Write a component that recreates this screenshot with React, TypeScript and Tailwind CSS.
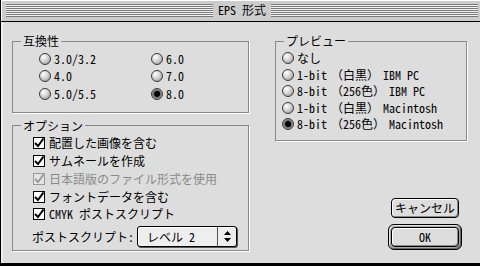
const font = "font-['Noto_Sans_Mono_CJK_JP','Noto_Sans_CJK_JP',sans-serif]";

const Radio = ({ on }: { on?: boolean }) => (
	<span
		className={
			"flex h-[12px] w-[12px] shrink-0 items-center justify-center rounded-full border border-[#3a3a3a] " +
			(on
				? "bg-[radial-gradient(circle_at_50%_50%,#000_0_35%,#666_45%,#bbb_85%)]"
				: "bg-[radial-gradient(circle_at_35%_30%,#ffffff_0,#d4d4d4_45%,#8c8c8c_100%)]")
		}
	>
		{on && <span className="h-[5px] w-[5px] rounded-full bg-black" />}
	</span>
);

const Check = ({ disabled }: { disabled?: boolean }) => (
	<span
		className={
			"flex h-[12px] w-[12px] shrink-0 items-center justify-center border " +
			(disabled ? "border-[#9a9a9a] bg-[#e4e4e4]" : "border-black bg-white")
		}
	>
		<svg width="10" height="10" viewBox="0 0 10 10">
			<path
				d="M1 5 L4 8 L9.5 0.5"
				fill="none"
				stroke={disabled ? "#9a9a9a" : "#000"}
				strokeWidth="2"
			/>
		</svg>
	</span>
);

const Group = ({ label, children }: { label: string; children: React.ReactNode }) => (
	<fieldset className="m-0 min-w-0 border border-[#8a8a8a] p-0 shadow-[1px_1px_0_#ffffff]">
		<legend className="ml-[8px] px-[2px] text-[12px] leading-[14px]">{label}</legend>
		{children}
	</fieldset>
);

const compat = [
	{ label: "3.0/3.2" },
	{ label: "6.0" },
	{ label: "4.0" },
	{ label: "7.0" },
	{ label: "5.0/5.5" },
	{ label: "8.0", on: true },
];

// thin gaps around the full-width brackets, as in the original
const preview = [
	{ label: "なし" },
	{ label: "1-bit\u2004（白黒）\u2004IBM PC" },
	{ label: "8-bit\u2004（256色）\u2004IBM PC" },
	{ label: "1-bit\u2004（白黒）\u2004Macintosh" },
	{ label: "8-bit\u2004（256色）\u2004Macintosh", on: true },
];

const options = [
	{ label: "配置した画像を含む" },
	{ label: "サムネールを作成" },
	{ label: "日本語版のファイル形式を使用", disabled: true },
	{ label: "フォントデータを含む" },
	{ label: "CMYK ポストスクリプト" },
];

const App = () => {
	return (
		<div
			className={
				"flex h-[266px] w-[480px] flex-col overflow-hidden border-b-[3px] border-l border-black bg-[#dddddd] text-black " +
				font
			}
		>
			{/* Title bar */}
			<div className="flex h-[22px] shrink-0 items-start border-b border-black bg-[#cccccc] pl-[5px] pr-[2px] shadow-[inset_1px_1px_0_#fff]">
				<div className="mt-[4px] h-[13px] flex-1 bg-[repeating-linear-gradient(to_bottom,#7a7a7a_0_1px,#f2f2f2_1px_2px)]" />
				<div className="px-[5px] pt-[2px] text-[12px] leading-[16px]">EPS 形式</div>
				<div className="mt-[4px] h-[13px] flex-1 bg-[repeating-linear-gradient(to_bottom,#7a7a7a_0_1px,#f2f2f2_1px_2px)]" />
			</div>

			<div className="flex flex-1 gap-[26px] px-[11px] pt-[12px] shadow-[inset_2px_0_0_#eeeeee]">
				{/* Left column */}
				<div className="flex w-[237px] flex-col gap-[6px]">
					<Group label="互換性">
						<div className="grid grid-cols-[112px_1fr] auto-rows-[17.5px] pb-[9px] pl-[26px] pt-[2px] text-[12px]">
							{compat.map((c) => (
								<div key={c.label} className="flex items-center gap-[3px]">
									<Radio on={c.on} />
									<span className="leading-[14px]">{c.label}</span>
								</div>
							))}
						</div>
					</Group>

					<Group label="オプション">
						<div className="flex flex-col pb-[3px] pl-[19px] pt-[2px] text-[12px]">
							{options.map((o) => (
								<div key={o.label} className="flex h-[17.75px] items-center gap-[4px] pl-[1px]">
									<Check disabled={o.disabled} />
									<span className={"leading-[14px] " + (o.disabled ? "text-[#8a8a8a]" : "")}>
										{o.label}
									</span>
								</div>
							))}
							<div className="mt-[3px] flex items-center">
								<span className="w-[105px] leading-[14px]">ポストスクリプト:</span>
								<div className="flex h-[21px] w-[100px] rounded-[3px] border border-black bg-[#eeeeee] shadow-[1px_1px_0_#555,inset_1px_1px_0_#fff]">
									<span className="flex-1 pl-[9px] leading-[19px]">レベル 2</span>
									<span className="flex w-[19px] items-center justify-center border-l border-[#555]">
										<svg width="7" height="11" viewBox="0 0 7 11">
											<path d="M3.5 0 L7 4 L0 4 Z M0 7 L7 7 L3.5 11 Z" fill="#000" />
										</svg>
									</span>
								</div>
							</div>
						</div>
					</Group>
				</div>

				{/* Right column */}
				<div className="flex w-[192px] flex-col">
					<Group label="プレビュー">
						<div className="flex flex-col pb-[7px] pl-[6px] pt-[2px] text-[12px]">
							{preview.map((p) => (
								<div key={p.label} className="flex h-[16.5px] items-center gap-[3px]">
									<Radio on={p.on} />
									<span className="whitespace-pre leading-[14px]">{p.label}</span>
								</div>
							))}
						</div>
					</Group>

					<div className="mr-[5px] mt-[57px] flex w-[74px] flex-col items-center gap-[6px] self-end text-[12px]">
						<button className="h-[20px] w-[68px] rounded-[4px] border border-black bg-[#dddddd] leading-[18px] shadow-[inset_1px_1px_0_#fff,inset_-1px_-1px_0_#8a8a8a]">
							キャンセル
						</button>
						<div className="rounded-[6px] border border-black bg-[#a8a8a8] p-[2px] shadow-[inset_1px_1px_0_#e8e8e8,inset_-1px_-1px_0_#666]">
							<button className="h-[20px] w-[68px] rounded-[4px] border border-black bg-[#dddddd] leading-[18px] shadow-[inset_1px_1px_0_#fff,inset_-1px_-1px_0_#8a8a8a]">
								OK
							</button>
						</div>
					</div>
				</div>
			</div>
		</div>
	);
};

export default App;
